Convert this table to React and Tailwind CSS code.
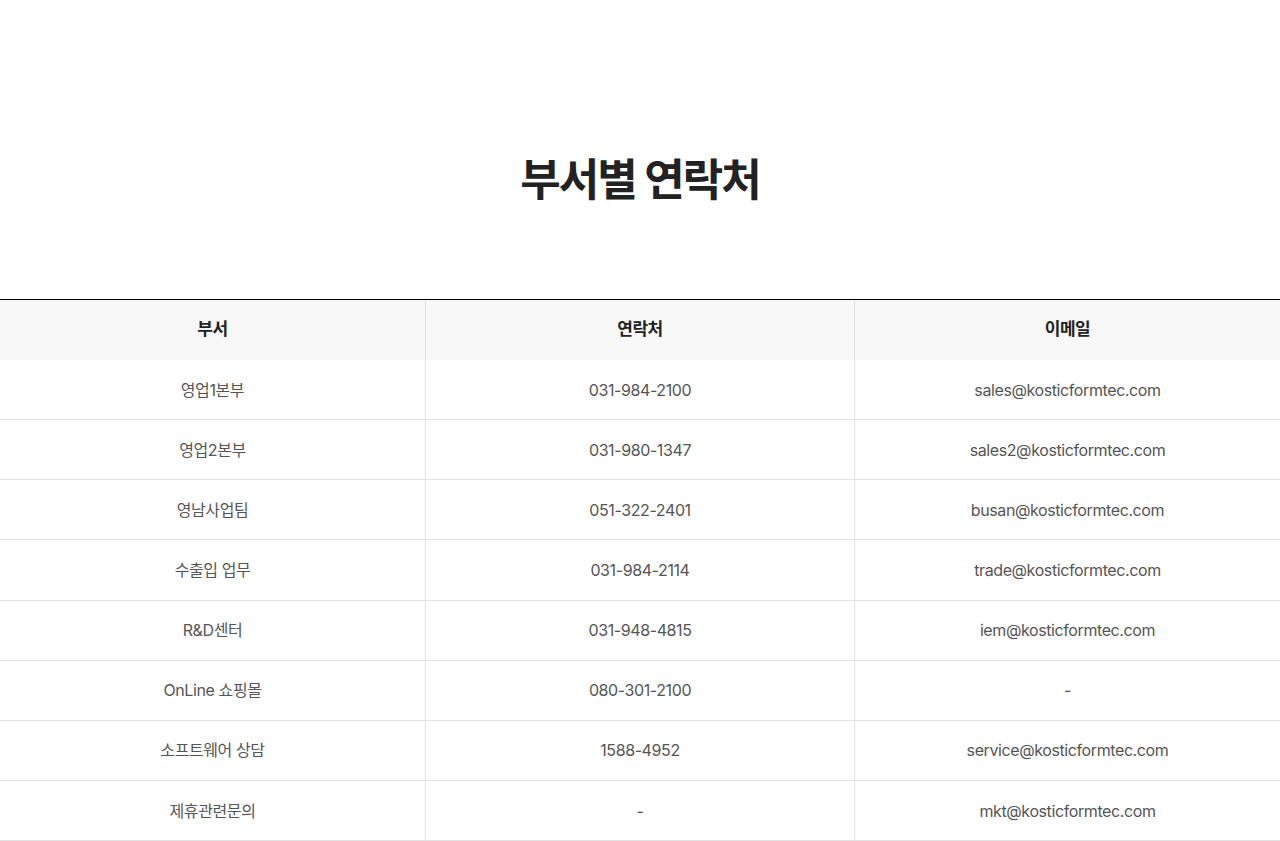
const rows = [
  { dept: '영업1본부', tel: '031-984-2100', email: 'sales@kosticformtec.com' },
  { dept: '영업2본부', tel: '031-980-1347', email: 'sales2@kosticformtec.com' },
  { dept: '영남사업팀', tel: '051-322-2401', email: 'busan@kosticformtec.com' },
  { dept: '수출입 업무', tel: '031-984-2114', email: 'trade@kosticformtec.com' },
  { dept: 'R&D센터', tel: '031-948-4815', email: 'iem@kosticformtec.com' },
  { dept: 'OnLine 쇼핑몰', tel: '080-301-2100', email: '-' },
  { dept: '소프트웨어 상담', tel: '1588-4952', email: 'service@kosticformtec.com' },
  { dept: '제휴관련문의', tel: '-', email: 'mkt@kosticformtec.com' },
]

const font = { fontFamily: 'Inter, "Noto Sans CJK KR", sans-serif' }

export default function App() {
  return (
    <div className="min-h-screen bg-white" style={font}>
      {/* Title */}
      <div className="flex justify-center pt-[150px] pb-[89px]">
        <h1 className="text-[44px] leading-[60px] font-bold text-[#222] tracking-[-2px]">
          부서별 연락처
        </h1>
      </div>

      {/* Table */}
      <div className="border-t border-black">
        <div className="grid grid-cols-[425px_429px_1fr] h-[60px] bg-[#f8f8f8] text-[17px] font-semibold text-[#222] tracking-[-0.5px]">
          <div className="flex items-center justify-center">부서</div>
          <div className="flex items-center justify-center border-l border-[#e2e2e2]">연락처</div>
          <div className="flex items-center justify-center border-l border-[#e2e2e2]">이메일</div>
        </div>
        {rows.map((r, i) => (
          <div
            key={i}
            className="grid grid-cols-[425px_429px_1fr] h-[60.15px] border-b border-[#e2e2e2] text-[16px] text-[#555] tracking-[-0.4px]"
          >
            <div className="flex items-center justify-center">{r.dept}</div>
            <div className="flex items-center justify-center border-l border-[#e2e2e2]">{r.tel}</div>
            <div className="flex items-center justify-center border-l border-[#e2e2e2]">{r.email}</div>
          </div>
        ))}
      </div>
    </div>
  )
}
